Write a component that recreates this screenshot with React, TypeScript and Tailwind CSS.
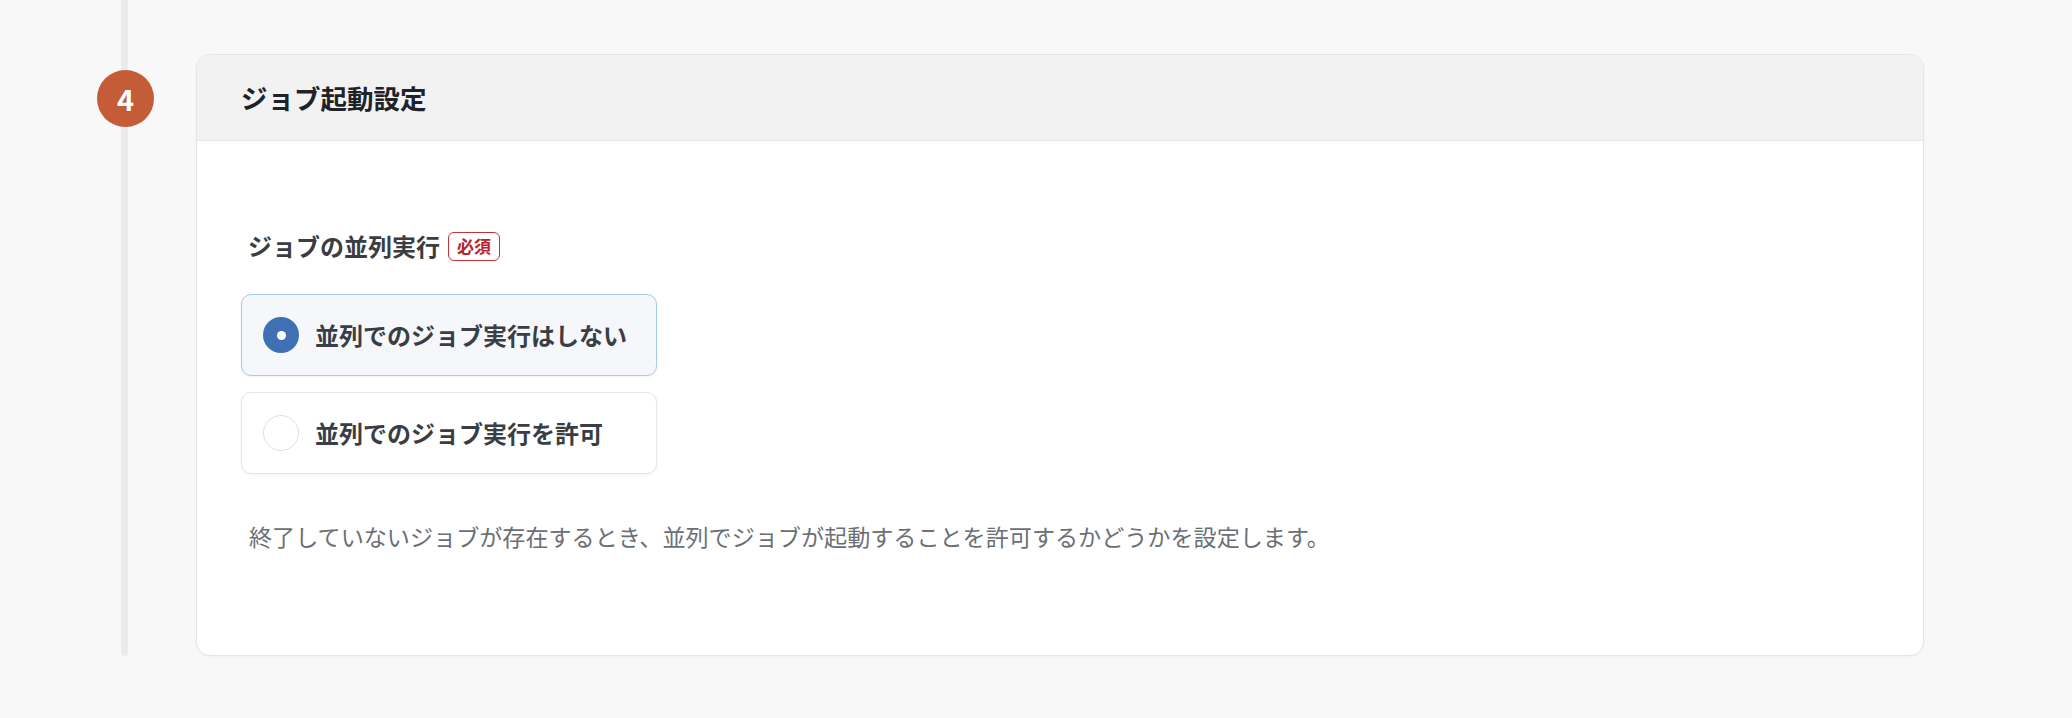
import { useState } from 'react'

const options = [
  { id: 'deny', label: '並列でのジョブ実行はしない' },
  { id: 'allow', label: '並列でのジョブ実行を許可' },
]

export default function App() {
  const [selected, setSelected] = useState('deny')

  return (
    <div className="min-h-screen bg-[#f8f8f8] font-['Noto_Sans_CJK_JP','Noto_Sans',sans-serif]">
      <div className="flex pl-[97px]">
        {/* step rail */}
        <div className="relative w-[57px] shrink-0">
          <div className="absolute left-[24px] top-0 bottom-0 w-[7px] rounded-b-full bg-[#ebebef]"></div>
          <div className="relative mt-[70px] flex h-[57px] w-[57px] items-center justify-center rounded-full bg-[#c45c37] text-[29px] font-bold text-white">
            4
          </div>
        </div>

        <div className="ml-[42px] mt-[54px] w-[1728px] overflow-hidden rounded-[14px] border border-[#e6e6e6] bg-white shadow-[0_1px_3px_rgba(0,0,0,0.04)]">
          <div className="flex h-[86px] items-center border-b border-[#e6e6e6] bg-[#f2f2f2] pl-[44px]">
            <h2 className="text-[26.5px] font-bold text-[#1f2328]">ジョブ起動設定</h2>
          </div>

          <div className="px-[44px] pt-[89px] pb-[103px]">
            <div className="flex h-[32px] items-center gap-2 pl-[7px]">
              <span className="text-[24px] font-bold text-[#3a3d42]">ジョブの並列実行</span>
              <span className="flex h-[29px] items-center rounded-[6px] border border-[#c5333a] px-[8px] text-[17px] font-bold text-[#b8232f]">
                必須
              </span>
            </div>

            <div className="mt-[32px] flex flex-col gap-[16px]">
              {options.map((o) => {
                const active = selected === o.id
                return (
                  <button
                    key={o.id}
                    onClick={() => setSelected(o.id)}
                    className={
                      active
                        ? 'flex h-[82px] w-[416px] items-center gap-4 rounded-[10px] border border-[#a5cbef] bg-[#f5f7fb] pl-[21px] text-left shadow-[0_1px_3px_rgba(0,0,0,0.05)]'
                        : 'flex h-[82px] w-[416px] items-center gap-4 rounded-[10px] border border-[#e6e6e6] bg-white pl-[21px] text-left shadow-[0_1px_3px_rgba(0,0,0,0.05)]'
                    }
                  >
                    {active ? (
                      <span className="flex h-[36px] w-[36px] items-center justify-center rounded-full bg-[#4070b4]">
                        <span className="h-[9px] w-[9px] rounded-full bg-white"></span>
                      </span>
                    ) : (
                      <span className="h-[36px] w-[36px] rounded-full border border-[#e0e0e0] bg-white"></span>
                    )}
                    <span className="text-[24px] font-bold text-[#3a3e44]">{o.label}</span>
                  </button>
                )
              })}
            </div>

            <p className="mt-[46px] pl-[8px] text-[23.1px] leading-[32px] text-[#6b6f75]">
              終了していないジョブが存在するとき、並列でジョブが起動することを許可するかどうかを設定します。
            </p>
          </div>
        </div>
      </div>
    </div>
  )
}
